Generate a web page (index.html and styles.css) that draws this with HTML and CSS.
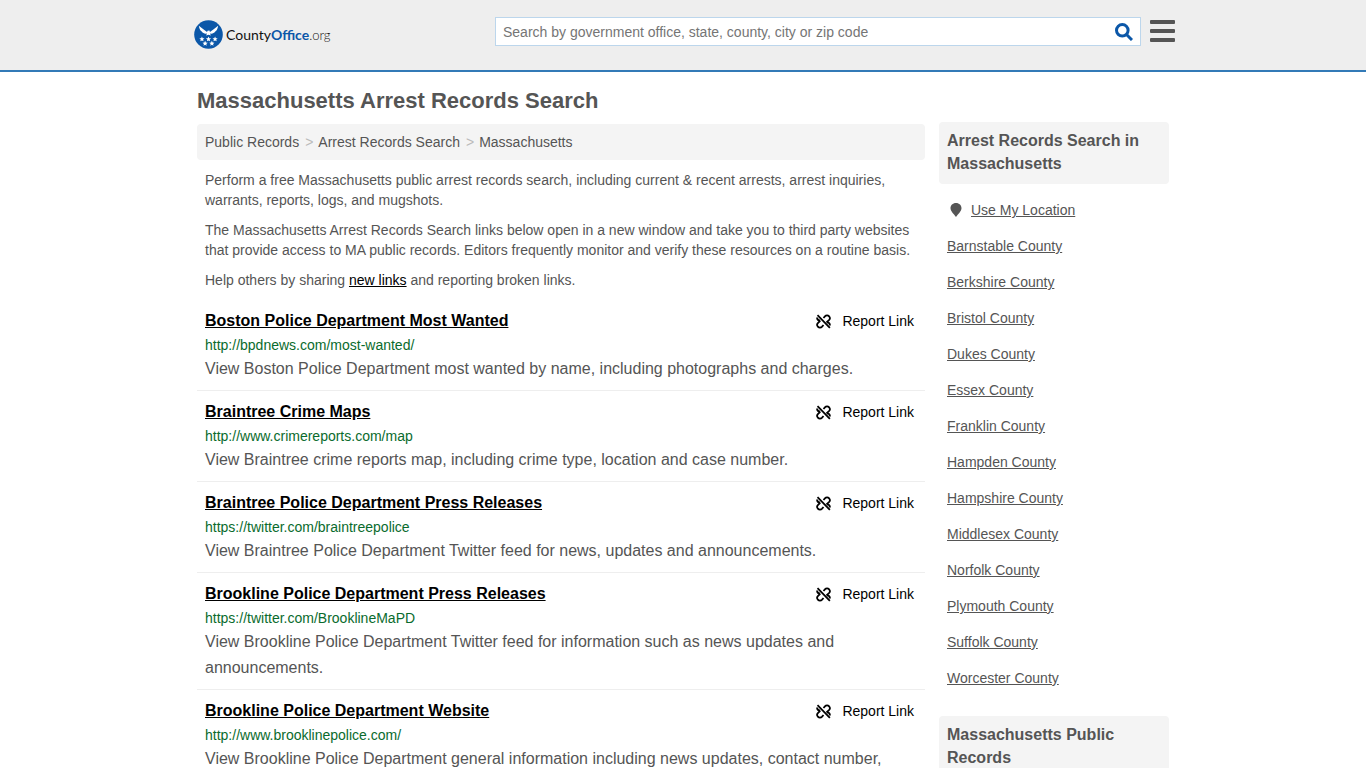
FILE: index.html
```
<!DOCTYPE html>
<html lang="en">
<head>
    <meta charset="UTF-8">
    <meta name="viewport" content="width=device-width, initial-scale=1.0">
    <title>Massachusetts Arrest Records Search</title>
    <link rel="stylesheet" href="styles.css">
</head>
<body>
    <svg class="sprite" aria-hidden="true">
        <symbol id="broken-link" viewBox="0 0 16 16">
            <g fill="none" stroke="currentColor" stroke-width="1.900">
                <path d="M1.600 1.200 L14.800 14.800"/>
                <path d="M8 4.300 L9.500 2.600 C10.800 1.200 12.800 1.300 13.900 2.400 C15 3.600 15 5.400 13.800 6.600 L11.200 9"/>
                <path d="M11.500 9 C13.500 9 14.900 10.200 14.900 12.200"/>
                <path d="M8 11.700 L6.500 13.400 C5.200 14.800 3.200 14.700 2.100 13.600 C1 12.400 1 10.600 2.200 9.400 L4.500 7.200"/>
                <path d="M4.500 7 C2.500 7 1.100 5.800 1.100 3.800"/>
            </g>
        </symbol>
    </svg>

    <header class="header">
        <div class="container header-row">
            <a class="logo" href="#">
                <svg class="logo-mark" viewBox="0 0 30 30" aria-hidden="true">
                    <defs>
                        <path id="star" d="M0-2.800 .8-.9 2.700-.8 1.200.4 1.700 2.300 0 1.300-1.700 2.300-1.200.4-2.700-.8-.8-.9Z"/>
                    </defs>
                    <circle cx="15" cy="15" r="14.800" fill="#0b57a8"/>
                    <g fill="#fff">
                        <path d="M5 6 L10 9.800 L13.500 12.500 L14 11 L16 10.800 L16.500 12.500 L20 9.800 L25 6 C24.500 9 23.500 11 22 12 C21 13.500 19.500 14.200 18 14.200 L16.500 14 L17.500 16 L15 15.200 L12.500 16 L13.500 14 L12 14.200 C10.500 14.200 9 13.500 8 12 C6.500 11 5.500 9 5 6Z"/>
                        <use href="#star" x="8.200" y="19.800"/>
                        <use href="#star" x="15" y="19.800"/>
                        <use href="#star" x="21.800" y="19.800"/>
                        <use href="#star" x="11.500" y="24.300"/>
                        <use href="#star" x="18.500" y="24.300"/>
                    </g>
                </svg>
                <span class="logo-text">County<b>Office</b><small>.org</small></span>
            </a>
            <form class="search">
                <input type="search" class="search-input" aria-label="Search" placeholder="Search by government office, state, county, city or zip code">
                <button type="submit" class="search-button" aria-label="Search">
                    <svg viewBox="0 0 18 18" aria-hidden="true"><circle cx="7.300" cy="7.300" r="5.800"/><path d="M11.500 11.500 L17 17"/></svg>
                </button>
            </form>
            <button type="button" class="menu-button" aria-label="Menu"><span></span><span></span><span></span></button>
        </div>
    </header>

    <div class="container">
        <h1>Massachusetts Arrest Records Search</h1>
        <div class="columns">
            <main class="main">
                <nav class="breadcrumb" aria-label="Breadcrumb">
                    <a href="#">Public Records</a><span>&gt;</span><a href="#">Arrest Records Search</a><span>&gt;</span><a href="#">Massachusetts</a>
                </nav>
                <div class="intro">
                    <p>Perform a free Massachusetts public arrest records search, including current &amp; recent arrests, arrest inquiries, warrants, reports, logs, and mugshots.</p>
                    <p>The Massachusetts Arrest Records Search links below open in a new window and take you to third party websites that provide access to MA public records. Editors frequently monitor and verify these resources on a routine basis.</p>
                    <p>Help others by sharing <a href="#">new links</a> and reporting broken links.</p>
                </div>

                <article class="record">
                    <div class="record-head">
                        <h2><a href="#">Boston Police Department Most Wanted</a></h2>
                        <button type="button" class="report"><svg><use href="#broken-link"/></svg>Report Link</button>
                    </div>
                    <p class="url">http://bpdnews.com/most-wanted/</p>
                    <p class="description">View Boston Police Department most wanted by name, including photographs and charges.</p>
                </article>
                <article class="record">
                    <div class="record-head">
                        <h2><a href="#">Braintree Crime Maps</a></h2>
                        <button type="button" class="report"><svg><use href="#broken-link"/></svg>Report Link</button>
                    </div>
                    <p class="url">http://www.crimereports.com/map</p>
                    <p class="description">View Braintree crime reports map, including crime type, location and case number.</p>
                </article>
                <article class="record">
                    <div class="record-head">
                        <h2><a href="#">Braintree Police Department Press Releases</a></h2>
                        <button type="button" class="report"><svg><use href="#broken-link"/></svg>Report Link</button>
                    </div>
                    <p class="url">https://twitter.com/braintreepolice</p>
                    <p class="description">View Braintree Police Department Twitter feed for news, updates and announcements.</p>
                </article>
                <article class="record">
                    <div class="record-head">
                        <h2><a href="#">Brookline Police Department Press Releases</a></h2>
                        <button type="button" class="report"><svg><use href="#broken-link"/></svg>Report Link</button>
                    </div>
                    <p class="url">https://twitter.com/BrooklineMaPD</p>
                    <p class="description">View Brookline Police Department Twitter feed for information such as news updates and announcements.</p>
                </article>
                <article class="record">
                    <div class="record-head">
                        <h2><a href="#">Brookline Police Department Website</a></h2>
                        <button type="button" class="report"><svg><use href="#broken-link"/></svg>Report Link</button>
                    </div>
                    <p class="url">http://www.brooklinepolice.com/</p>
                    <p class="description">View Brookline Police Department general information including news updates, contact number,</p>
                </article>
            </main>

            <aside class="sidebar">
                <h3>Arrest Records Search in Massachusetts</h3>
                <ul>
                    <li>
                        <svg class="pin" viewBox="0 0 12 14" aria-hidden="true"><path d="M6 0C2.700 0 .5 2.300 .5 5.200C.5 8.200 4 11 6 14C8 11 11.500 8.200 11.500 5.200C11.500 2.300 9.300 0 6 0Z"/></svg>
                        <a href="#">Use My Location</a>
                    </li>
                    <li><a href="#">Barnstable County</a></li>
                    <li><a href="#">Berkshire County</a></li>
                    <li><a href="#">Bristol County</a></li>
                    <li><a href="#">Dukes County</a></li>
                    <li><a href="#">Essex County</a></li>
                    <li><a href="#">Franklin County</a></li>
                    <li><a href="#">Hampden County</a></li>
                    <li><a href="#">Hampshire County</a></li>
                    <li><a href="#">Middlesex County</a></li>
                    <li><a href="#">Norfolk County</a></li>
                    <li><a href="#">Plymouth County</a></li>
                    <li><a href="#">Suffolk County</a></li>
                    <li><a href="#">Worcester County</a></li>
                </ul>
                <h3>Massachusetts Public Records</h3>
            </aside>
        </div>
    </div>
</body>
</html>
```
FILE: styles.css
```
/* General Styles */
* {
    box-sizing: border-box;
}

body {
    margin: 0;
    font-family: "Liberation Sans", Arial, sans-serif;
    font-size: 14px;
    line-height: 20px;
    color: #555;
    background: #fff;
}

h1, h2, h3, p, ul {
    margin: 0;
    padding: 0;
}

a {
    color: inherit;
}

button {
    padding: 0;
    border: none;
    background: none;
    font: inherit;
    cursor: pointer;
}

.sprite {
    display: none;
}

.container {
    max-width: 972px;
    margin: 0 auto;
}

/* Header */
.header {
    background: #eee;
    border-bottom: 2px solid #337ab7;
}

.header-row {
    display: flex;
    align-items: flex-start;
    max-width: 984px;
    padding: 17px 0 21px 3px;
}

.logo {
    display: flex;
    align-items: center;
    gap: 3px;
    padding-top: 3px;
    color: #111;
    text-decoration: none;
}

.logo-mark {
    width: 29px;
    height: 29px;
}

.logo-text {
    font-family: Lato, sans-serif;
    font-size: 14px;
}

.logo-text b {
    color: #0b57a8;
}

.logo-text small {
    font-size: 13px;
    font-weight: 300;
}

.search {
    display: flex;
    width: 646px;
    height: 29px;
    margin-left: auto;
    background: #fff;
    border: 1px solid #bcd6ec;
}

.search-input {
    flex: 1;
    min-width: 0;
    padding: 0 7px;
    border: none;
    outline: none;
    background: none;
    font: inherit;
}

.search-input::placeholder {
    color: #757575;
}

.search-button {
    display: flex;
    align-items: center;
    padding: 0 7px;
}

.search-button svg {
    width: 18px;
    height: 18px;
    fill: none;
    stroke: #0b57a8;
    stroke-width: 3;
}

.menu-button {
    display: flex;
    flex-direction: column;
    gap: 5px;
    width: 25px;
    margin: 3px 0 0 9px;
}

.menu-button span {
    width: 100%;
    height: 4px;
    border-radius: 1px;
    background: #555;
}

/* Page */
h1 {
    padding: 15px 0 9px;
    font-size: 22px;
    line-height: 28px;
}

.columns {
    display: flex;
    align-items: flex-start;
    gap: 14px;
}

.main {
    flex: 1;
    min-width: 0;
}

.breadcrumb {
    padding: 8px;
    border-radius: 4px;
    background: #f4f4f4;
}

.breadcrumb a {
    text-decoration: none;
}

.breadcrumb span {
    padding: 0 5px 0 6px;
    color: #bbb;
}

.intro {
    padding: 10px 8px 0;
}

.intro p {
    margin-bottom: 10px;
}

.intro a {
    color: #000;
}

/* Records */
.record {
    padding: 9px 8px 8px;
    border-bottom: 1px solid #eee;
}

.record-head {
    display: flex;
    justify-content: space-between;
    padding-right: 3px;
    margin-bottom: 2px;
    color: #000;
}

.record h2 {
    font-size: 16px;
    line-height: 24px;
}

.report {
    display: flex;
    align-items: center;
    gap: 11px;
    color: #000;
}

.report svg {
    width: 15px;
    height: 15px;
}

.url {
    margin-bottom: 1px;
    color: #0a6b2d;
}

.description {
    font-size: 16px;
    line-height: 26px;
}

/* Sidebar */
.sidebar {
    width: 230px;
    margin-top: -2px;
}

.sidebar h3 {
    padding: 7px 8px 9px;
    border-radius: 4px;
    background: #f4f4f4;
    font-size: 16px;
    line-height: 23px;
}

.sidebar ul {
    padding: 8px 8px 20px;
    list-style: none;
}

.sidebar li {
    display: flex;
    align-items: center;
    height: 36px;
}

.pin {
    width: 12px;
    height: 14px;
    margin: 0 9px 0 3px;
    fill: #555;
}
```
